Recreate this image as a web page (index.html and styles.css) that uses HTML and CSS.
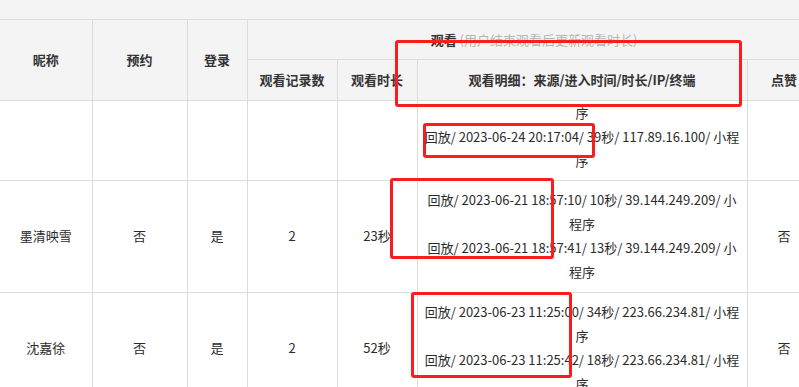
FILE: index.html
```html
<!DOCTYPE html>
<html lang="zh-CN">
<head>
<meta charset="utf-8">
<title>观看记录</title>
<link rel="stylesheet" href="styles.css">
</head>
<body>
<div class="page">
  <div class="topband"></div>
  <table class="grid">
    <colgroup>
      <col class="c-nick">
      <col class="c-book">
      <col class="c-login">
      <col class="c-count">
      <col class="c-dur">
      <col class="c-detail">
      <col class="c-like">
    </colgroup>
    <thead>
      <tr class="h1">
        <th rowspan="2">昵称</th>
        <th rowspan="2">预约</th>
        <th rowspan="2">登录</th>
        <th colspan="4" class="group">观看 <span class="hint">(用户结束观看后更新观看时长)</span></th>
      </tr>
      <tr class="h2">
        <th>观看记录数</th>
        <th>观看时长</th>
        <th>观看明细：来源/进入时间/时长/IP/终端</th>
        <th>点赞</th>
      </tr>
    </thead>
    <tbody>
      <tr class="r-first">
        <td></td>
        <td></td>
        <td></td>
        <td></td>
        <td></td>
        <td class="detail first">
          <div>序</div>
          <div>回放/ 2023-06-24 20:17:04/ 39秒/ 117.89.16.100/ 小程序</div>
        </td>
        <td></td>
      </tr>
      <tr>
        <td>墨清映雪</td>
        <td>否</td>
        <td>是</td>
        <td>2</td>
        <td>23秒</td>
        <td class="detail">
          <div>回放/ 2023-06-21 18:57:10/ 10秒/ 39.144.249.209/ 小程序</div>
          <div>回放/ 2023-06-21 18:57:41/ 13秒/ 39.144.249.209/ 小程序</div>
        </td>
        <td>否</td>
      </tr>
      <tr>
        <td>沈嘉徐</td>
        <td>否</td>
        <td>是</td>
        <td>2</td>
        <td>52秒</td>
        <td class="detail">
          <div>回放/ 2023-06-23 11:25:00/ 34秒/ 223.66.234.81/ 小程序</div>
          <div>回放/ 2023-06-23 11:25:42/ 18秒/ 223.66.234.81/ 小程序</div>
        </td>
        <td>否</td>
      </tr>
    </tbody>
  </table>
  <div class="mark m1"></div>
  <div class="mark m2"></div>
  <div class="mark m3"></div>
  <div class="mark m4"></div>
</div>
</body>
</html>
```
FILE: styles.css
```css
html, body {
  margin: 0;
  padding: 0;
  background: #fff;
  overflow: hidden;
}
body {
  width: 799px;
  height: 387px;
  font-family: "Noto Sans CJK SC", "Microsoft YaHei", sans-serif;
  font-size: 13px;
  color: #333;
}
.page {
  position: relative;
  width: 799px;
  height: 387px;
  overflow: hidden;
}
.topband {
  height: 19px;
  background: #f4f4f4;
  border-bottom: 1px solid #dcdcdc;
}
.grid {
  table-layout: fixed;
  border-collapse: collapse;
  width: 821px;
}
.c-nick { width: 92px; }
.c-book { width: 95px; }
.c-login { width: 60px; }
.c-count { width: 90px; }
.c-dur { width: 80px; }
.c-detail { width: 330px; }
.c-like { width: 74px; }

.grid th,
.grid td {
  border: 1px solid #dcdcdc;
  text-align: center;
  vertical-align: middle;
  padding: 0 10px;
  line-height: 24px;
}
.grid tr > :first-child { border-left: none; }
.grid thead tr:first-child th { border-top: none; }
.grid th {
  background: #f4f4f4;
  font-weight: 700;
  color: #333;
}
.h1 th.group { height: 39px; }
.h2 th { height: 40px; }
.hint {
  font-weight: 400;
  color: #b5b5b5;
}
.grid td {
  padding: 7px 10px 8px;
  color: #2b2b2b;
}
.grid td.detail {
  padding-left: 6px;
  padding-right: 6px;
}
.grid td.detail.first {
  padding-top: 0;
  padding-bottom: 7px;
}
.detail div {
  word-break: break-all;
}

.mark {
  position: absolute;
  border: 3px solid #fb1d1d;
  border-radius: 3px;
  box-sizing: border-box;
}
.m1 { left: 395px; top: 40px; width: 347px; height: 67px; }
.m2 { left: 423px; top: 123px; width: 172px; height: 35px; }
.m3 { left: 390px; top: 178px; width: 164px; height: 81px; }
.m4 { left: 411px; top: 292px; width: 161px; height: 86px; }
```
